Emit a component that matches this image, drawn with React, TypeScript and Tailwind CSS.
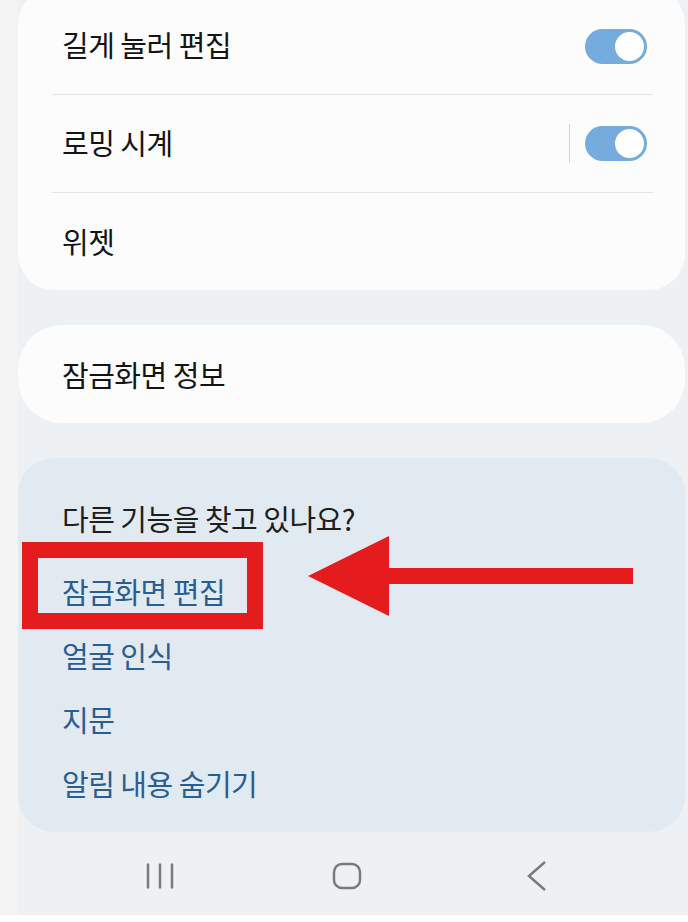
import { useState } from "react";

const font = { fontFamily: '"Noto Sans CJK KR", "Noto Sans", sans-serif' };

const Label = ({ children, className = "" }: { children: string; className?: string }) => (
  <span className={`whitespace-nowrap text-[29px] tracking-[-0.5px] leading-none ${className}`}>
    {children}
  </span>
);

const Toggle = ({ on }: { on: boolean }) => (
  <div
    className={`w-[62px] h-[35px] rounded-full p-[3px] flex ${
      on ? "bg-[#76acdd] justify-end" : "bg-[#c8c8c8] justify-start"
    }`}
  >
    <div className="w-[29px] h-[29px] rounded-full bg-white" />
  </div>
);

const links = ["잠금화면 편집", "얼굴 인식", "지문", "알림 내용 숨기기"];

export default function App() {
  const [longPress, setLongPress] = useState(true);
  const [roaming, setRoaming] = useState(true);

  return (
    <div className="w-[688px] h-[922px] bg-white overflow-hidden" style={font}>
      <div className="relative h-[915px] flex">
        <div className="w-[18px] bg-[#f4f4f4]" />
        <div className="flex-1 bg-[#eef1f4] pr-[3px] flex flex-col">
          {/* settings card */}
          <div className="-mt-[12px] bg-[#fcfcfc] rounded-[36px] pl-[34px] pr-[32px]">
            <div className="h-[107px] pt-[10px] flex items-center justify-between border-b border-[#e3e3e3]">
              <div className="pl-[10px]">
                <Label className="text-[#141414]">길게 눌러 편집</Label>
              </div>
              <button className="mr-[6px]" onClick={() => setLongPress(!longPress)}>
                <Toggle on={longPress} />
              </button>
            </div>
            <div className="h-[98px] flex items-center justify-between border-b border-[#e3e3e3]">
              <div className="pl-[10px]">
                <Label className="text-[#141414]">로밍 시계</Label>
              </div>
              <div className="flex items-center gap-[15px] mr-[6px]">
                <div className="w-px h-[39px] bg-[#d4d4d4]" />
                <button onClick={() => setRoaming(!roaming)}>
                  <Toggle on={roaming} />
                </button>
              </div>
            </div>
            <div className="h-[97px] flex items-center pl-[10px]">
              <Label className="text-[#141414]">위젯</Label>
            </div>
          </div>

          {/* lock screen info */}
          <div className="mt-[35px] h-[98px] bg-[#fcfcfc] rounded-[44px] pl-[44px] flex items-center">
            <Label className="text-[#141414]">잠금화면 정보</Label>
          </div>

          {/* looking for something else */}
          <div className="mt-[35px] h-[374px] bg-[#e1e9f1] rounded-[36px] pl-[44px] pt-[41px]">
            <div className="h-[38px] flex items-center">
              <Label className="text-[#1e1e1e]">다른 기능을 찾고 있나요?</Label>
            </div>
            <div className="mt-[22px] flex flex-col">
              {links.map((l) => (
                <a key={l} href="#" className="h-[64px] flex items-center">
                  <Label className="text-[#2a5d91]">{l}</Label>
                </a>
              ))}
            </div>
          </div>

          {/* nav bar */}
          <div className="flex-1 flex items-center pl-[127px] pt-[4px] text-[#7a7a7a]">
            <svg width="30" height="28" viewBox="0 0 30 28" fill="none" stroke="currentColor" strokeWidth="2.5">
              <path d="M3 1.5v25M15 1.5v25M27 1.5v25" />
            </svg>
            <svg className="ml-[157px]" width="30" height="28" viewBox="0 0 30 28" fill="none" stroke="currentColor" strokeWidth="2.5">
              <rect x="2" y="2" width="26" height="24" rx="8" />
            </svg>
            <svg className="ml-[164px]" width="22" height="30" viewBox="0 0 22 30" fill="none" stroke="currentColor" strokeWidth="2.5">
              <path d="M19 1L3 15l16 14" />
            </svg>
          </div>
        </div>

        {/* annotation overlay */}
        <div className="absolute left-[22px] top-[542px] w-[241px] h-[87px] border-[16px] border-[#e41c1e]" />
        <svg className="absolute left-[300px] top-[530px]" width="340" height="95" viewBox="0 0 340 95">
          <polygon points="8,46 89,6 89,38 333,38 333,54 89,54 89,86" fill="#e41c1e" />
        </svg>
      </div>
    </div>
  );
}
